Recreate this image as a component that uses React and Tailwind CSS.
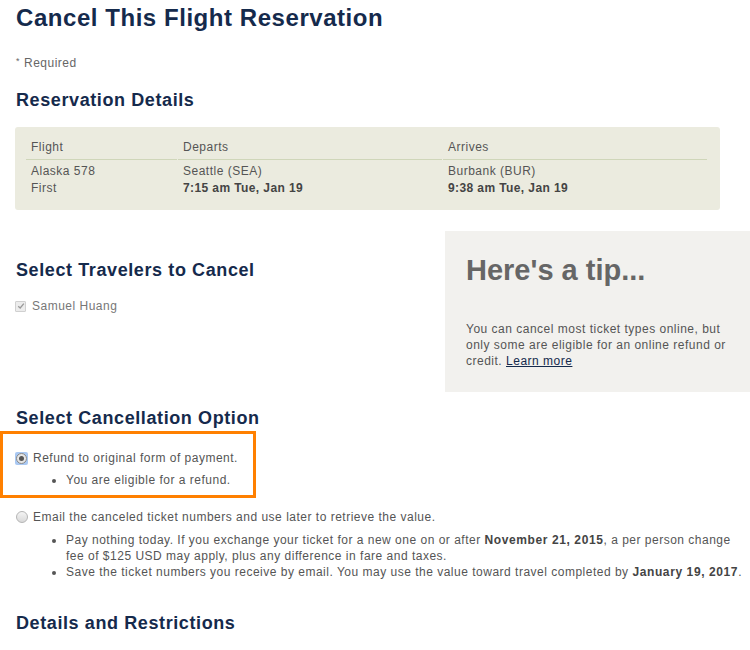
import React from "react";

const heading = "text-[18px] leading-[22px] font-bold tracking-[0.6px] text-[#152a4c]";

const Radio = ({ checked }) =>
  checked ? (
    <span className="flex h-[13px] w-[13px] shrink-0 items-center justify-center rounded-[2px] bg-[#a9c8f2]">
      <span className="flex h-[11px] w-[11px] items-center justify-center rounded-full border border-[#8a8a8a] bg-[#e6e6e6]">
        <span className="h-[5px] w-[5px] rounded-full bg-[#555]" />
      </span>
    </span>
  ) : (
    <span className="h-[12px] w-[12px] shrink-0 rounded-full border border-[#b5b5b5] bg-gradient-to-b from-[#f4f4f4] to-[#d9d9d9]" />
  );

const App = () => {
  const rows = [
    { flight: "Alaska 578", sub: "First", dep: "Seattle (SEA)", depTime: "7:15 am Tue, Jan 19", arr: "Burbank (BUR)", arrTime: "9:38 am Tue, Jan 19" },
  ];

  return (
    <div className="min-h-[650px] w-[750px] bg-white font-['Liberation_Sans',Arial,sans-serif] text-[12px] leading-[16px] tracking-[0.5px] text-[#555]">
      <h1 className="pl-4 pt-[3px] text-[24px] leading-[30px] font-bold tracking-[0.55px] text-[#152a4c]">
        Cancel This Flight Reservation
      </h1>
      <p className="mt-[22px] pl-4 text-[#666]">
        <span className="mr-[4px] align-top text-[9px] leading-[12px]">*</span>Required
      </p>

      <h2 className={`mt-[18px] pl-4 ${heading}`}>Reservation Details</h2>

      {/* Reservation table */}
      <div className="ml-[15px] mt-4 w-[705px] rounded-[3px] bg-[#ebebdf] pb-[13px] pl-[11px] pt-3">
        <div className="grid grid-cols-[151px_264px_264px] gap-x-px">
          {["Flight", "Departs", "Arrives"].map((h) => (
            <div key={h} className="border-b border-[#cfd6b9] pb-1 pl-[5px]">
              {h}
            </div>
          ))}
          {rows.map((r) => (
            <React.Fragment key={r.flight}>
              <div className="pl-[5px] pt-[3px] leading-[17px]">
                <div>{r.flight}</div>
                <div>{r.sub}</div>
              </div>
              <div className="pl-[5px] pt-[3px] leading-[17px]">
                <div>{r.dep}</div>
                <div className="font-bold tracking-[0.4px] text-[#444]">{r.depTime}</div>
              </div>
              <div className="pl-[5px] pt-[3px] leading-[17px]">
                <div>{r.arr}</div>
                <div className="font-bold tracking-[0.4px] text-[#444]">{r.arrTime}</div>
              </div>
            </React.Fragment>
          ))}
        </div>
      </div>

      {/* Travelers + tip */}
      <div className="mt-[21px] flex">
        <div className="flex-1 pl-4 pt-7">
          <h2 className={heading}>Select Travelers to Cancel</h2>
          <label className="-ml-px mt-[17px] flex items-center gap-[6px] text-[#777]">
            <span className="flex h-[11px] w-[11px] items-center justify-center rounded-[1px] border border-[#d0d0d0] bg-[#ececec]">
              <svg viewBox="0 0 10 10" className="h-[8px] w-[8px]">
                <path d="M1.5 5.2 L4 7.5 L8.5 2" fill="none" stroke="#999" strokeWidth="1.6" />
              </svg>
            </span>
            Samuel Huang
          </label>
        </div>
        <div className="h-[161px] w-[305px] bg-[#f2f1ee] pl-[21px] pr-3 pt-[21px]">
          <h3 className="text-[29px] leading-[36px] font-bold tracking-normal text-[#666]">Here's a tip...</h3>
          <p className="mt-[33px]">
            You can cancel most ticket types online, but only some are eligible for an online refund or credit.{" "}
            <a href="#" className="text-[#152a4c] underline">
              Learn more
            </a>
          </p>
        </div>
      </div>

      {/* Cancellation option */}
      <h2 className={`mt-[15px] pl-4 ${heading}`}>Select Cancellation Option</h2>
      <div className="mt-[2px] h-[67px] w-[256px] border-[3px] border-[#ff8000] pl-3 pt-4">
        <label className="flex items-center gap-[5px]">
          <Radio checked />
          Refund to original form of payment.
        </label>
        <ul className="mt-[6px] list-disc pl-[51px] marker:text-[#555]">
          <li>You are eligible for a refund.</li>
        </ul>
      </div>

      <label className="ml-4 mt-[11px] flex items-center gap-[5px]">
        <Radio />
        Email the canceled ticket numbers and use later to retrieve the value.
      </label>
      <ul className="mt-[7px] list-disc pl-[66px] pr-[4px]">
        <li>
          Pay nothing today. If you exchange your ticket for a new one on or after{" "}
          <b className="tracking-[0.6px] text-[#444]">November 21, 2015</b>, a per person change
          <br />
          fee of $125 USD may apply, plus any difference in fare and taxes.
        </li>
        <li>
          Save the ticket numbers you receive by email. You may use the value toward travel completed by{" "}
          <b className="tracking-[0.6px] text-[#444]">January 19, 2017</b>.
        </li>
      </ul>

      <h2 className={`mt-8 pl-4 ${heading}`}>Details and Restrictions</h2>
    </div>
  );
};

export default App;
